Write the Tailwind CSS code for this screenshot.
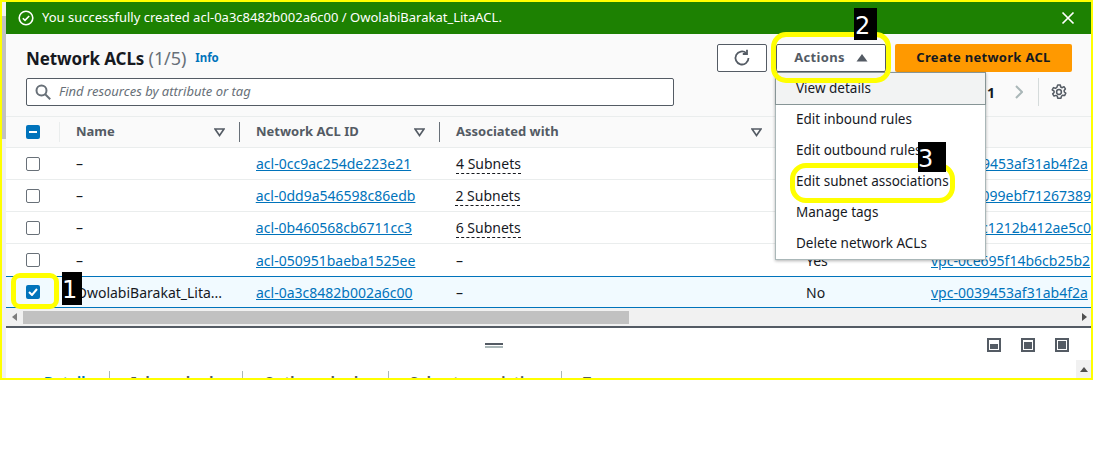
<!DOCTYPE html>
<html lang="en">
<head>
<meta charset="UTF-8"/>
<title>Network ACLs</title>
<script src="https://cdn.jsdelivr.net/npm/@tailwindcss/browser@4"></script>
</head>
<body class="bg-white font-['Noto_Sans','Open_Sans',sans-serif] text-[14px] text-[#16191f]">
<div class="relative w-[1093px] h-[460px] overflow-hidden">

  <!-- console frame with yellow outline -->
  <div class="relative h-[380px] border-2 border-[#ffff00] bg-white overflow-hidden">

    <!-- page scrollbar on the left -->
    <div class="absolute left-0 top-0 bottom-0 w-[4px] bg-[#f1f1f1]">
      <div class="mt-[14px] h-[123px] bg-[#c1c1c1]"></div>
    </div>

    <!-- flash -->
    <div class="h-[32px] ml-[4px] bg-[#1d8102] text-white flex items-center pl-[12px] pr-[16px] gap-[8px]">
      <svg width="16" height="16" viewBox="0 0 16 16" fill="none" stroke="white" stroke-width="1.6"><circle cx="8" cy="8" r="6.8"/><path d="M4.8 8.2l2.2 2.2 4.2-4.4"/></svg>
      <span class="text-[13px] flex-1">You successfully created acl-0a3c8482b002a6c00 / OwolabiBarakat_LitaACL.</span>
      <svg width="14" height="14" viewBox="0 0 14 14" fill="none" stroke="white" stroke-width="1.7"><path d="M1.5 1.5l11 11M12.5 1.5l-11 11"/></svg>
    </div>

    <div class="ml-[4px] bg-[#fafafa]">
      <!-- title row -->
      <div class="h-[38px] pt-[10px] pl-[20px] pr-[19px] flex items-center">
        <h1 class="text-[17px] font-bold leading-none tracking-[-0.1px]">Network ACLs <span class="font-normal text-[18px] text-[#687078]">(1/5)</span></h1>
        <a class="ml-[9px] text-[11.5px] font-bold text-[#0073bb]">Info</a>
        <div class="ml-auto flex items-center gap-[9px]">
          <button class="w-[50px] h-[28px] border border-[#545b64] rounded-[2px] bg-white flex items-center justify-center">
            <svg width="18" height="18" viewBox="0 0 18 18" fill="none" stroke="#545b64" stroke-width="1.8"><path d="M15.5 9a6.5 6.5 0 1 1-2.2-4.9"/><path d="M14 .8v4.2H9.8"/></svg>
          </button>
          <button class="w-[110px] h-[28px] bg-white border border-[#545b64] rounded-[2px] flex items-center justify-center gap-[11px] text-[13px] font-bold text-[#545b64] tracking-[0.3px]">
            Actions
            <svg width="12" height="8" viewBox="0 0 12 8" fill="#545b64"><path d="M6 0l5.5 7.5H.5z"/></svg>
          </button>
          <button class="w-[177px] h-[28px] bg-[#ff9900] rounded-[2px] text-[13px] font-bold text-[#16191f] tracking-[0.3px]">Create network ACL</button>
        </div>
      </div>

      <!-- search row -->
      <div class="mt-[6px] h-[28px] pl-[20px] pr-[24px] flex items-center">
        <div class="w-[648px] h-[28px] border border-[#545b64] rounded-[2px] bg-white flex items-center pl-[8px] gap-[8px]">
          <svg width="16" height="16" viewBox="0 0 16 16" fill="none" stroke="#687078" stroke-width="2"><circle cx="6.5" cy="6.5" r="5"/><path d="M10.2 10.2l5 5"/></svg>
          <span class="italic text-[13px] text-[#687078]">Find resources by attribute or tag</span>
        </div>
        <div class="ml-auto flex items-center">
          <span class="font-bold">1</span>
          <svg class="ml-[20px]" width="8" height="14" viewBox="0 0 8 14" fill="none" stroke="#aab7b8" stroke-width="2"><path d="M1 1l6 6-6 6"/></svg>
          <span class="ml-[15px] h-[28px] border-l border-[#d5dbdb]"></span>
          <svg class="ml-[12px]" width="16" height="16" viewBox="0 0 16 16" fill="none" stroke="#545b64" stroke-width="1.5" stroke-linejoin="round"><circle cx="8" cy="8" r="2.4"/><path d="M6.7 1h2.6l.4 2 1.5.7 1.8-1 1.4 2.2-1.3 1.5.2 1.6 1.5 1.2-1.2 2.4-2-.4-1.2 1.1-.4 1.9H6.7l-.4-2-1.4-.8-1.9.7-1.3-2.2 1.4-1.4V7.2L1.2 5.9l1.3-2.3 1.9.7 1.4-.9z"/></svg>
        </div>
      </div>

      <!-- table header -->
      <div class="mt-[10px] h-[32px] border-y border-[#eaeded] flex items-center text-[13px] font-bold text-[#545b64]">
        <div class="w-[54px] pl-[20px] flex items-center h-full">
          <span class="w-[14px] h-[14px] rounded-[2px] bg-[#0073bb] flex items-center justify-center"><span class="w-[8px] h-[2px] bg-white"></span></span>
          <span class="ml-[19px] h-[20px] border-l border-[#eaeded]"></span>
        </div>
        <div class="w-[179px] pl-[16px] pr-[14px] flex items-center justify-between">Name<svg width="11" height="9" viewBox="0 0 11 9" fill="none" stroke="#545b64" stroke-width="1.6"><path d="M1 1h9L5.5 7.5z"/></svg></div>
        <span class="h-[20px] border-l border-[#687078]"></span>
        <div class="w-[199px] pl-[16px] pr-[14px] flex items-center justify-between">Network ACL ID<svg width="11" height="9" viewBox="0 0 11 9" fill="none" stroke="#545b64" stroke-width="1.6"><path d="M1 1h9L5.5 7.5z"/></svg></div>
        <span class="h-[20px] border-l border-[#687078]"></span>
        <div class="w-[330px] pl-[16px] pr-[8px] flex items-center justify-between">Associated with<svg width="11" height="9" viewBox="0 0 11 9" fill="none" stroke="#545b64" stroke-width="1.6"><path d="M1 1h9L5.5 7.5z"/></svg></div>
      </div>
    </div>

    <!-- rows -->
    <div class="ml-[4px] bg-white whitespace-nowrap">
      <div class="h-[32px] border-b border-[#eaeded] flex items-center">
        <span class="ml-[20px] w-[14px] h-[14px] rounded-[2px] border border-[#687078]"></span>
        <span class="ml-[36px] w-[180px]">–</span>
        <a class="w-[200px] text-[#0073bb] underline">acl-0cc9ac254de223e21</a>
        <span class="w-[350px]"><span class="border-b border-dashed border-[#16191f]">4 Subnets</span></span>
        <a class="ml-[125px] text-[#0073bb] underline">vpc-0039453af31ab4f2a</a>
      </div>
      <div class="h-[32px] border-b border-[#eaeded] flex items-center">
        <span class="ml-[20px] w-[14px] h-[14px] rounded-[2px] border border-[#687078]"></span>
        <span class="ml-[36px] w-[180px]">–</span>
        <a class="w-[200px] text-[#0073bb] underline">acl-0dd9a546598c86edb</a>
        <span class="w-[350px]"><span class="border-b border-dashed border-[#16191f]">2 Subnets</span></span>
        <a class="ml-[125px] text-[#0073bb] underline">vpc-0b1099ebf71267389</a>
      </div>
      <div class="h-[32px] border-b border-[#eaeded] flex items-center">
        <span class="ml-[20px] w-[14px] h-[14px] rounded-[2px] border border-[#687078]"></span>
        <span class="ml-[36px] w-[180px]">–</span>
        <a class="w-[200px] text-[#0073bb] underline">acl-0b460568cb6711cc3</a>
        <span class="w-[350px]"><span class="border-b border-dashed border-[#16191f]">6 Subnets</span></span>
        <a class="ml-[125px] text-[#0073bb] underline">vpc-0aac1212b412ae5c0</a>
      </div>
      <div class="h-[32px] flex items-center">
        <span class="ml-[20px] w-[14px] h-[14px] rounded-[2px] border border-[#687078]"></span>
        <span class="ml-[36px] w-[180px]">–</span>
        <a class="w-[200px] text-[#0073bb] underline">acl-050951baeba1525ee</a>
        <span class="w-[350px]">–</span>
        <span class="w-[125px]">Yes</span>
        <a class="text-[#0073bb] underline">vpc-0ce695f14b6cb25b2</a>
      </div>
      <div class="h-[32px] flex items-center border-y border-[#0073bb] bg-[#f1faff]">
        <span class="ml-[20px] w-[14px] h-[14px] rounded-[2px] bg-[#0073bb] flex items-center justify-center">
          <svg width="10" height="8" viewBox="0 0 10 8" fill="none" stroke="white" stroke-width="2"><path d="M1 4l3 3 5-6"/></svg>
        </span>
        <span class="ml-[36px] w-[180px]">OwolabiBarakat_Lita...</span>
        <a class="w-[200px] text-[#0073bb] underline">acl-0a3c8482b002a6c00</a>
        <span class="w-[350px]">–</span>
        <span class="w-[125px]">No</span>
        <a class="text-[#0073bb] underline">vpc-0039453af31ab4f2a</a>
      </div>
    </div>

    <!-- horizontal scrollbar -->
    <div class="ml-[4px] h-[20px] bg-[#f1f1f1] border-b-2 border-[#545b64] flex items-center">
      <svg class="ml-[6px]" width="5" height="8" viewBox="0 0 5 8" fill="#7d7d7d"><path d="M5 0v8L0 4z"/></svg>
      <div class="ml-[6px] w-[606px] h-[13px] bg-[#c1c1c1]"></div>
      <svg class="ml-auto mr-[4px]" width="5" height="8" viewBox="0 0 5 8" fill="#505050"><path d="M0 0v8l5-4z"/></svg>
    </div>

    <!-- split panel bar -->
    <div class="ml-[4px] h-[52px] bg-white relative flex items-start">
      <div class="absolute left-[479px] top-[15px] w-[18px]">
        <div class="h-[2px] bg-[#545b64]"></div>
        <div class="h-[2px] mt-[1px] bg-[#aab7b8]"></div>
      </div>
      <div class="ml-auto mr-[22px] mt-[10px] flex gap-[20px]">
        <span class="w-[14px] h-[14px] border-2 border-[#545b64] flex items-end p-[1px]"><span class="w-full h-[5px] bg-[#545b64]"></span></span>
        <span class="w-[14px] h-[14px] border-2 border-[#545b64] flex items-end p-[1px]"><span class="w-full h-[7px] bg-[#545b64]"></span></span>
        <span class="w-[14px] h-[14px] border-2 border-[#545b64] flex items-end p-[1px]"><span class="w-full h-full bg-[#545b64]"></span></span>
      </div>
      <div class="absolute right-0 top-[32px] w-[15px] h-[19px] bg-[#f1f1f1] flex justify-center pt-[7px]">
        <svg width="8" height="5" viewBox="0 0 8 5" fill="#505050"><path d="M4 0l4 5H0z"/></svg>
      </div>
    </div>

    <!-- tabs, cut off by the crop -->
    <div class="absolute left-[4px] top-[369px] h-[20px] flex items-start font-bold text-[#545b64] whitespace-nowrap">
      <span class="ml-[38px] w-[65px] text-[#0073bb]">Details</span>
      <span class="h-[20px] border-l border-[#aab7b8]"></span>
      <span class="ml-[21px] w-[111px]">Inbound rules</span>
      <span class="h-[20px] border-l border-[#aab7b8]"></span>
      <span class="ml-[21px] w-[124px]">Outbound rules</span>
      <span class="h-[20px] border-l border-[#aab7b8]"></span>
      <span class="ml-[21px] w-[151px] overflow-hidden">Subnet associations</span>
      <span class="h-[20px] border-l border-[#aab7b8]"></span>
      <span class="ml-[21px]">Tags</span>
    </div>

    <!-- actions dropdown -->
    <div class="absolute left-[773px] top-[70px] w-[211px] bg-white border border-[#aab7b8] shadow-[0_1px_3px_rgba(0,0,0,0.3)] text-[13.5px]">
      <div class="h-[33px] bg-[#f2f3f3] border border-[#879596] -m-px pl-[20px] flex items-center">View details</div>
      <div class="h-[31px] pl-[20px] flex items-center">Edit inbound rules</div>
      <div class="h-[31px] pl-[20px] flex items-center">Edit outbound rules</div>
      <div class="h-[31px] pl-[20px] flex items-center">Edit subnet associations</div>
      <div class="h-[31px] pl-[20px] flex items-center">Manage tags</div>
      <div class="h-[31px] pl-[20px] flex items-center">Delete network ACLs</div>
    </div>
  </div>

  <!-- tutorial annotations over the screenshot -->
  <div class="absolute left-[11px] top-[273px] w-[48px] h-[36px] border-[5px] border-[#ffff00] rounded-[9px]"></div>
  <div class="absolute left-[62px] top-[272px] w-[20px] h-[33px] bg-black text-white font-['DejaVu_Sans'] text-[24px] leading-[37px]">1</div>
  <div class="absolute left-[771px] top-[32px] w-[120px] h-[51px] border-[5px] border-[#ffff00] rounded-[15px]"></div>
  <div class="absolute left-[854px] top-[8px] w-[23px] h-[32px] bg-black text-white font-['DejaVu_Sans'] text-[24px] leading-[36px] pl-[1px]">2</div>
  <div class="absolute left-[790px] top-[163px] w-[165px] h-[40px] border-[5px] border-[#ffff00] rounded-[16px]"></div>
  <div class="absolute left-[918px] top-[142px] w-[28px] h-[30px] bg-black text-white font-['DejaVu_Sans'] text-[24px] leading-[34px]">3</div>
</div>
</body>
</html>
